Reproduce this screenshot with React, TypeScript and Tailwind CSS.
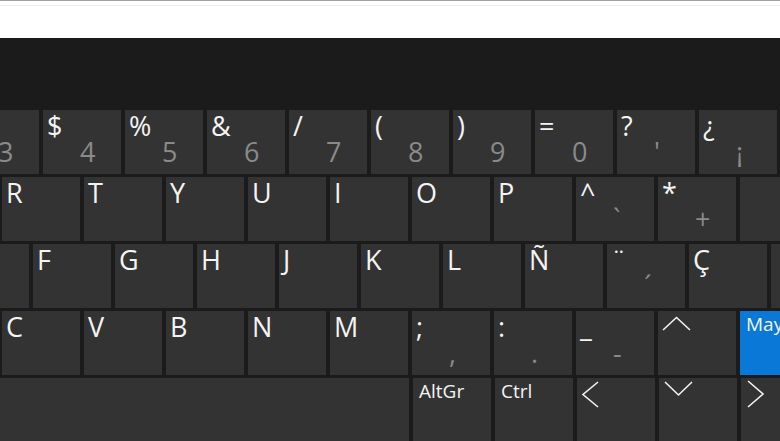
import React from 'react'

type KeyDef = {
  m?: string
  s?: string
  w?: string
  small?: boolean
  blue?: boolean
  icon?: 'up' | 'down' | 'left' | 'right'
}

const Chevron = ({ dir }: { dir: 'up' | 'down' | 'left' | 'right' }) => {
  const pts = {
    up: '5,19 18.5,6.5 32,19',
    down: '6,4 19.5,17 33,4',
    left: '21,4 6,16.5 21,29',
    right: '7,3 22,16 7,29',
  }[dir]
  return (
    <svg width="40" height="34" viewBox="0 0 40 34" className="absolute left-0 top-0">
      <polyline points={pts} fill="none" stroke="#f2f2f2" strokeWidth="1.6" />
    </svg>
  )
}

const Key = ({ k }: { k: KeyDef }) => (
  <div
    className={`relative h-[64px] shrink-0 flex flex-col ${k.w ?? 'w-[78px]'} ${
      k.blue ? 'bg-[#0a78d6]' : 'bg-[#333333]'
    }`}
  >
    {k.icon && <Chevron dir={k.icon} />}
    {!k.small && (
      <span className="h-[29px] pl-[4px] pt-[2px] text-[27px] leading-[27px] text-[#f4f4f4] whitespace-nowrap">
        {k.m}
      </span>
    )}
    {k.m && k.small && (
      <span className="pl-[6px] text-[19px] leading-[26px] text-[#f4f4f4] whitespace-nowrap">{k.m}</span>
    )}
    {k.s && (
      <span className="pl-[37px] mt-[-1px] text-[27px] leading-[27px] text-[#8a8a8a] whitespace-nowrap">{k.s}</span>
    )}
  </div>
)

const rows: { ml: string; keys: KeyDef[] }[] = [
  {
    ml: 'ml-[-39px]',
    keys: [
      { s: '3' },
      { m: '$', s: '4' },
      { m: '%', s: '5' },
      { m: '&', s: '6' },
      { m: '/', s: '7' },
      { m: '(', s: '8' },
      { m: ')', s: '9' },
      { m: '=', s: '0' },
      { m: '?', s: "'" },
      { m: '¿', s: '¡' },
    ],
  },
  {
    ml: 'ml-[2px]',
    keys: [
      { m: 'R' },
      { m: 'T' },
      { m: 'Y' },
      { m: 'U' },
      { m: 'I' },
      { m: 'O' },
      { m: 'P' },
      { m: '^', s: '`' },
      { m: '*', s: '+' },
      {},
    ],
  },
  {
    ml: 'ml-[-49px]',
    keys: [
      {},
      { m: 'F' },
      { m: 'G' },
      { m: 'H' },
      { m: 'J' },
      { m: 'K' },
      { m: 'L' },
      { m: 'Ñ' },
      { m: '¨', s: '´' },
      { m: 'Ç' },
      {},
    ],
  },
  {
    ml: 'ml-[2px]',
    keys: [
      { m: 'C' },
      { m: 'V' },
      { m: 'B' },
      { m: 'N' },
      { m: 'M' },
      { m: ';', s: ',' },
      { m: ':', s: '.' },
      { m: '_', s: '-' },
      { icon: 'up' },
      { m: 'May', small: true, blue: true },
    ],
  },
  {
    ml: 'ml-0',
    keys: [
      { w: 'w-[409px]' },
      { m: 'AltGr', small: true },
      { m: 'Ctrl', small: true },
      { icon: 'left' },
      { icon: 'down' },
      { icon: 'right' },
    ],
  },
]

export default function App() {
  return (
    <div
      className="w-[780px] h-[441px] overflow-hidden flex flex-col bg-[#1b1b1b]"
      style={{ fontFamily: '"Open Sans", "Noto Sans", sans-serif' }}
    >
      <div className="h-[38px] shrink-0 bg-white border-t border-[#a3a3a3]">
        <div className="mt-[4px] h-px bg-[#ededed]" />
      </div>
      <div className="flex-1 flex flex-col gap-[3px] pt-[72px] overflow-hidden">
        {rows.map((row, i) => (
          <div key={i} className={`flex gap-[4px] shrink-0 ${row.ml}`}>
            {row.keys.map((k, j) => (
              <Key key={j} k={k} />
            ))}
          </div>
        ))}
      </div>
    </div>
  )
}
